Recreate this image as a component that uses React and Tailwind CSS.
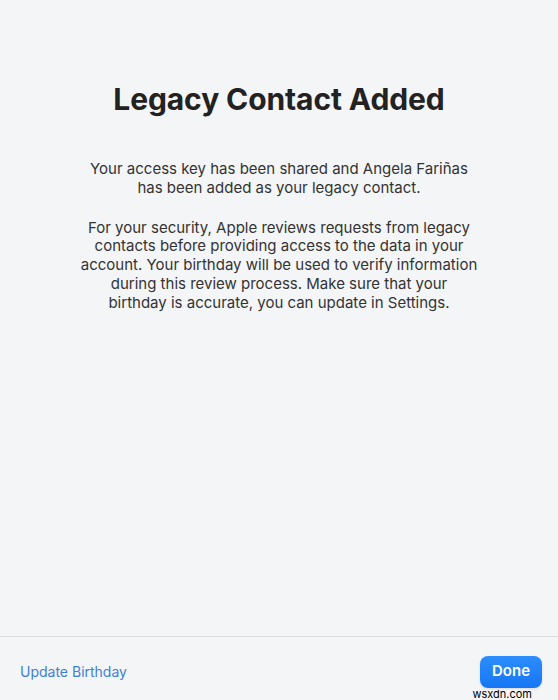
export default function App() {
  return (
    <div
      className="relative flex h-[700px] w-[558px] flex-col bg-[#f4f5f7] text-[#2a2a2a]"
      style={{ fontFamily: "Inter, 'Noto Sans', sans-serif" }}
    >
      {/* Main message */}
      <main className="flex flex-1 flex-col items-center px-6 pt-[80px]">
        <h1 className="text-[30px] font-bold leading-[38px] tracking-[-0.1px] text-[#222]">
          Legacy Contact Added
        </h1>
        <div className="mt-[42px] w-[397px] text-center text-[15px] leading-[18.8px] text-[#333]">
          <p>
            Your access key has been shared and Angela Fariñas has been added
            as your legacy contact.
          </p>
          <p className="mt-[21px]">
            For your security, Apple reviews requests from legacy contacts
            before providing access to the data in your account. Your birthday
            will be used to verify information during this review process. Make
            sure that your birthday is accurate, you can update in Settings.
          </p>
        </div>
      </main>

      {/* Footer actions */}
      <footer className="flex h-[64px] items-center justify-between border-t border-[#dcdde0] pt-[6px] pl-[20px] pr-[16px]">
        <button className="text-[14px] text-[#3f7fd6]">Update Birthday</button>
        <button className="h-[32px] w-[62px] rounded-[8px] bg-gradient-to-b from-[#2c8dfd] to-[#1576f5] text-[15px] font-semibold text-white shadow-sm">
          Done
        </button>
      </footer>

      <span className="absolute bottom-0 right-[26px] text-[11px] leading-[12px] text-black">
        wsxdn.com
      </span>
    </div>
  );
}
